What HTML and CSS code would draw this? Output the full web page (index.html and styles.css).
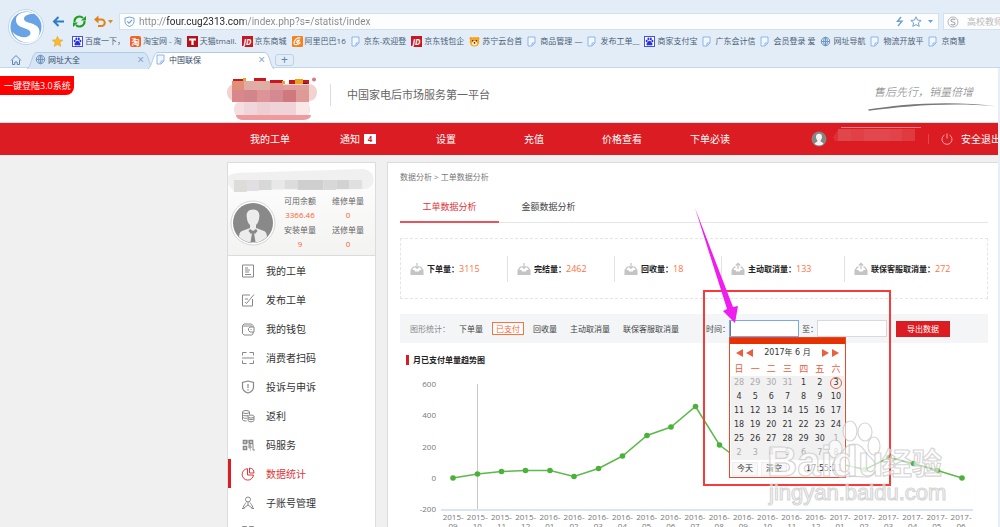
FILE: index.html
```html
<!DOCTYPE html>
<html lang="zh-CN">
<head>
  <meta charset="UTF-8">
  <meta name="viewport" content="width=device-width, initial-scale=1.0">
  <title>中国联保</title>
  <link rel="stylesheet" href="styles.css">
</head>
<body>

  <!-- shared icons -->
  <svg class="defs" width="0" height="0">
    <symbol id="i-page" viewBox="0 0 11 11"><path d="M1 1h7v6l-3 3H1z" fill="#f3f8ff" stroke="#8db4ec"/><path d="M5 10V7h3" fill="none" stroke="#8db4ec"/></symbol>
    <symbol id="i-baidu" viewBox="0 0 11 11"><rect x=".5" y=".5" width="10" height="10" fill="#fff" stroke="#4550e6"/><g fill="#2932e1"><ellipse cx="2.7" cy="5" rx="1" ry="1.3"/><ellipse cx="4.4" cy="2.9" rx="1" ry="1.3"/><ellipse cx="6.8" cy="2.9" rx="1" ry="1.3"/><ellipse cx="8.4" cy="5" rx="1" ry="1.3"/><path d="M5.5 4.8c1.400 0 1.500 1.200 2.600 2.100 1 1 .3 2.600-1 2.500-1-.2-2.200-.2-3.200 0-1.300.1-2-1.500-1-2.500 1.100-.9 1.200-2.100 2.600-2.100z"/></g></symbol>
    <symbol id="i-jd" viewBox="0 0 11 11"><rect width="11" height="11" fill="#c81623"/><text x="5.500" y="8.500" text-anchor="middle" font-size="8" font-weight="700" font-style="italic" fill="#fff">JD</text></symbol>
    <symbol id="i-globe" viewBox="0 0 11 11"><g fill="none" stroke="#6f96bd"><circle cx="5.500" cy="5.500" r="4.200"/><ellipse cx="5.500" cy="5.500" rx="1.900" ry="4.200"/><path d="M1.300 5.500h8.400M5.500 1.300v8.400" /></g></symbol>
    <symbol id="i-in" viewBox="0 0 14 14"><path d="M3 4.500L.5 8v5h13V8L11 4.500H9.500v1.200h.8L11.800 8H9.500L9 9.500H5L4.500 8H2.200l1.500-2.300h.8V4.500z" fill="#c4c4c4"/><path d="M7 1v5M4.800 4.200L7 6.400l2.200-2.200" fill="none" stroke="#c4c4c4" stroke-width="1.200"/></symbol>
    <symbol id="i-out" viewBox="0 0 14 14"><path d="M3 4.500L.5 8v5h13V8L11 4.500H9.500v1.200h.8L11.800 8H9.500L9 9.500H5L4.500 8H2.200l1.500-2.300h.8V4.500z" fill="#c4c4c4"/><path d="M7 7V1.500M4.800 3.500L7 1.300l2.200 2.200" fill="none" stroke="#c4c4c4" stroke-width="1.200"/></symbol>
  </svg>

  <!-- browser toolbar -->
  <div class="browser">
    <div class="browser-top">
      <svg class="browser-logo" viewBox="0 0 36 36">
        <circle cx="18" cy="18" r="17.500" fill="#f7fbff" stroke="#c3d3e6"/>
        <circle cx="18" cy="18" r="15.500" fill="#68a3e6"/>
        <path d="M26 5C19 1 8 3.500 8 11c0 9.500 14.500 7 14.500 13 0 4-6.500 5.500-12 3-2.500-1-4.500-2.500-6-4.500 2 7 8 11 15 11 7-.5 12-5 12-11 0-9.500-15.500-7.500-15.500-12.500 0-4 5.500-5.500 10-5z" fill="#fff"/>
      </svg>
      <div class="browser-rows">
        <div class="address-row">
          <button class="nav-btn" aria-label="后退"><svg width="13" height="13" viewBox="0 0 13 13"><path d="M12 6.500H2M6.500 2L2 6.500 6.500 11" fill="none" stroke="#2b7cc4" stroke-width="2"/></svg></button>
          <button class="nav-btn" aria-label="刷新"><svg width="13" height="13" viewBox="0 0 13 13"><path d="M1.500 7a5 5 0 0 1 8.500-4M11.500 6a5 5 0 0 1-8.500 4" fill="none" stroke="#1fa01f" stroke-width="2"/><path d="M8 5.500h5V1zM5 7.500H0V12z" fill="#1fa01f"/></svg></button>
          <button class="nav-btn undo" aria-label="撤销"><svg width="12" height="13" viewBox="0 0 12 13"><path d="M2 4.500h5.500a3.200 3.200 0 0 1 0 6.500H4" fill="none" stroke="#e08317" stroke-width="2"/><path d="M0 4.500L4.500.5v8z" fill="#e08317"/></svg></button>
          <button class="nav-btn caret-btn" aria-label="更多"><svg width="5" height="4" viewBox="0 0 5 4"><path d="M0 0h5L2.500 3.500z" fill="#d98a2b"/></svg></button>
          <div class="address">
            <svg width="11" height="11" viewBox="0 0 11 11"><path d="M5.500 1L10 2.200v3.300c0 2.500-2 4-4.500 5-2.500-1-4.500-2.500-4.500-5V2.200z" fill="none" stroke="#7aa0cc"/><path d="M3.200 5.300l1.800 1.800 3-3.300" fill="none" stroke="#7aa0cc" stroke-width="1.200"/></svg>
            <input class="url" type="text" aria-label="网址" value="http://four.cug2313.com/index.php?s=/statist/index">
            <svg width="8" height="11" viewBox="0 0 8 11"><path d="M5 1L1.500 5.200H6L2 10" fill="none" stroke="#6f9fd0" stroke-width="1.400"/></svg>
            <svg width="12" height="11" viewBox="0 0 12 11"><path d="M6 .8l1.500 3.300 3.600.4-2.700 2.400.8 3.500L6 8.600l-3.200 1.800.8-3.500L.9 4.500l3.600-.4z" fill="none" stroke="#6f9fd0"/></svg>
            <svg width="5" height="3" viewBox="0 0 5 3"><path d="M0 0h5L2.500 3z" fill="#6f9fd0"/></svg>
          </div>
          <div class="search">
            <svg width="12" height="12" viewBox="0 0 12 12"><circle cx="6" cy="6" r="5" fill="none" stroke="#b5b5b5"/><path d="M8.300 3.800C6.500 2.500 4 3 4 4.500 4 6.500 8 5.500 8 7.500 8 9 5.500 9.300 3.700 8.200" fill="none" stroke="#aaa" stroke-width="1.200"/></svg>
            <input type="text" aria-label="搜索" placeholder="高校教师">
          </div>
        </div>
        <div class="bookmarks">
          <svg class="fav" viewBox="0 0 11 11"><path d="M5.500.3L7 3.800l3.800.3-2.900 2.500.9 3.800-3.300-2-3.300 2 .9-3.800L.2 4.100 4 3.800z" fill="#f9bb2c" stroke="#e59a18" stroke-width=".5"/></svg>
          <a href="#"><svg><use href="#i-baidu"/></svg>百度一下，</a>
          <a href="#"><svg viewBox="0 0 11 11"><rect width="11" height="11" rx="2" fill="#f0622c"/><text x="5.500" y="8.500" text-anchor="middle" font-size="8" font-weight="700" fill="#fff">淘</text></svg>淘宝网 - 淘</a>
          <a href="#"><svg viewBox="0 0 11 11"><rect width="11" height="11" fill="#b5121b"/><path d="M2 2.500h7v2H6.600V9H4.400V4.500H2z" fill="#fff"/></svg>天猫tmall.</a>
          <a href="#"><svg><use href="#i-jd"/></svg>京东商城</a>
          <a href="#"><svg viewBox="0 0 11 11"><rect width="11" height="11" rx="1" fill="#f58220"/><path d="M8.500 2C5 1.200 2 4 2 7.500 2.300 9.500 6 9 8.500 6.500M4 6.500c1-2 2-2.600 3.200-2.300C7.800 5 6 6.500 5 7" fill="none" stroke="#fff" stroke-width="1.200"/></svg>阿里巴巴16</a>
          <a href="#"><svg><use href="#i-page"/></svg>京东-欢迎登</a>
          <a href="#"><svg><use href="#i-jd"/></svg>京东钱包企</a>
          <a href="#"><svg viewBox="0 0 11 11"><circle cx="2" cy="2.500" r="1.500" fill="#f39a1d"/><circle cx="9" cy="2.500" r="1.500" fill="#f39a1d"/><circle cx="5.500" cy="5.800" r="4.800" fill="#f9a51b"/><ellipse cx="5.500" cy="7.200" rx="2.600" ry="2.200" fill="#fff3d6"/><circle cx="3.600" cy="4.800" r=".8" fill="#3a2a10"/><circle cx="7.400" cy="4.800" r=".8" fill="#3a2a10"/><circle cx="5.500" cy="6.800" r=".9" fill="#3a2a10"/></svg>苏宁云台首</a>
          <a href="#"><svg><use href="#i-page"/></svg>商品管理 —</a>
          <a href="#"><svg><use href="#i-page"/></svg>发布工单__</a>
          <a href="#"><svg><use href="#i-baidu"/></svg>商家支付宝</a>
          <a href="#"><svg><use href="#i-page"/></svg>广东会计信</a>
          <a href="#"><svg><use href="#i-page"/></svg>会员登录 爱</a>
          <a href="#"><svg><use href="#i-globe"/></svg>网址导航</a>
          <a href="#"><svg><use href="#i-page"/></svg>物流开放平</a>
          <a href="#"><svg><use href="#i-page"/></svg>京商慧</a>
        </div>
      </div>
    </div>
    <div class="browser-tabs">
      <svg class="home" viewBox="0 0 12 12"><path d="M1 6.500L6 1.500l5 5M2.500 6v4.500h2.300V8h2.400v2.500h2.300V6" fill="none" stroke="#5c88b8"/></svg>
      <div class="browser-tab">
        <svg class="tab-shape" viewBox="0 0 126 17" preserveAspectRatio="none"><path d="M0 17C4 15 5 2 9 .5h108c5 1 5 14 9 16.500" fill="#d6e5f6" stroke="#b3cae4"/></svg>
        <svg class="tab-icon" viewBox="0 0 11 11"><use href="#i-globe"/></svg>
        <span>网址大全</span>
        <button class="tab-close" aria-label="关闭">×</button>
      </div>
      <div class="browser-tab current">
        <svg class="tab-shape" viewBox="0 0 126 17" preserveAspectRatio="none"><path d="M0 17C4 15 5 2 9 .5h108c5 1 5 14 9 16.500" fill="#fff" stroke="#b3cae4"/></svg>
        <svg class="tab-icon" viewBox="0 0 11 11"><use href="#i-page"/></svg>
        <span>中国联保</span>
        <button class="tab-close" aria-label="关闭">×</button>
      </div>
      <button class="new-tab" aria-label="新标签">+</button>
    </div>
  </div>

  <div class="page">
    <header class="header">
      <a class="quick-login" href="#">一键登陆3.0系统</a>
      <svg class="logo" viewBox="0 0 92 46">
        <path d="M6 2h11v4H6zM27 1h12v5H27zM43 3h13v4H43zM62 3h20v7H62z" fill="#c81a1e"/>
        <path d="M16 1h3v3h-3zM37 4h4v3h-4zM55 4h3v3h-3zM68 2h8v6h-8z" fill="#e9a31c"/>
        <path d="M76 6h4v4h-4z" fill="#4a1a3a"/>
        <circle cx="87" cy="2.500" r="2" fill="#d9797e"/>
        <rect y="7" width="90" height="17" rx="8" fill="#f3d3d0"/>
        <rect x="7" y="24" width="76" height="17" rx="8" fill="#f5dde0"/>
        <path d="M5 4h12v9H5z" fill="#e0907a"/><path d="M17 4h26v9H17z" fill="#dfada3"/><path d="M43 6h13v7H43z" fill="#dd9a96"/><path d="M56 8h26v5H56z" fill="#e0a09b"/>
        <path d="M5 13h12v12H5z" fill="#d9878b"/><path d="M17 13h13v12H17z" fill="#d2868c"/><path d="M30 13h13v12H30z" fill="#dd9497"/><path d="M43 13h13v12H43z" fill="#d48a90"/><path d="M56 13h13v12H56z" fill="#cf797e"/><path d="M69 13h13v12H69z" fill="#dd9a96"/>
        <path d="M17 25h13v13H17z" fill="#f0d6db"/><path d="M30 25h13v13H30z" fill="#ecced3"/><path d="M43 25h26v13H43z" fill="#f0d3d8"/><path d="M69 25h13v13H69z" fill="#f8e8e8"/>
        <path d="M9 38h75c0 4-5 5-9 5H17c-5 0-8-2-8-5z" fill="#ef9a9c"/>
      </svg>
      <p class="tagline">中国家电后市场服务第一平台</p>
      <div class="slogan">
        <span>售后先行，销量倍增</span>
        <svg viewBox="0 0 140 9" preserveAspectRatio="none"><path d="M0 7.500C35 2 90-2 140 4.500 90 0 40 4 1 8.800z" fill="#777"/></svg>
      </div>
    </header>

    <nav class="nav">
      <a href="#">我的工单</a>
      <a href="#">通知<b class="badge">4</b></a>
      <a href="#">设置</a>
      <a href="#">充值</a>
      <a href="#">价格查看</a>
      <a href="#">下单必读</a>
      <div class="user">
        <svg class="user-face" viewBox="0 0 16 16"><circle cx="8" cy="8" r="7.500" fill="#858585"/><path d="M8 2.800c2.400 0 3.200 1.700 3 3.500-.2 1.700-.9 2.700-1.500 3.500.2 1.700 2.700 1.500 3 3-2 2.300-7 2.300-9 0 .3-1.500 2.800-1.300 3-3C5.900 9 5.200 8 5 6.300c-.2-1.800.6-3.500 3-3.500z" fill="#f2f2f2"/></svg>
        <svg class="user-name" viewBox="0 0 90 16"><path d="M8 0h80v1H8z" fill="#eb8084"/><path d="M0 10L5 3h8v11H2z" fill="#de3037"/><path d="M5 2h13v12H5z" fill="#e0474c"/><path d="M18 2h13v12H18z" fill="#df4147"/><path d="M31 2h26v12H31z" fill="#e1484e"/><path d="M57 2h12v12H57z" fill="#e04349"/><path d="M69 2h13v12H69z" fill="#df3a40"/></svg>
        <i class="user-sep"></i>
        <svg class="power" viewBox="0 0 12 12"><path d="M3.500 2a5 5 0 1 0 5 0M6 .5v5" fill="none" stroke="#f3a6a9"/></svg>
        <a href="#">安全退出</a>
      </div>
    </nav>

    <div class="layout">
      <aside class="sidebar">
        <div class="profile">
          <svg class="profile-name" viewBox="0 0 148 24"><path d="M0 8C2 2 20 4 40 3L135 0c15 1 15 18 3 20-40 2-90-1-125 3C5 24-2 16 0 8z" fill="#f0f0f0"/><path d="M6 11h13v12H6z" fill="#dcdcd9"/><path d="M19 11h12v11H19z" fill="#e2dfe4"/><path d="M31 11h13v10H31z" fill="#d8d8d8"/><path d="M44 11h13v9H44z" fill="#e8e8e8"/><path d="M57 11h13v9H57z" fill="#dcdcdc"/><path d="M70 11h26v10H70z" fill="#cfcfcf"/><path d="M96 11h13v10H96z" fill="#d8d8d8"/><path d="M109 11h13v9h-13z" fill="#d2d2d2"/><path d="M122 11h13v9h-13z" fill="#e0e0e0"/></svg>
          <div class="profile-body">
            <svg class="avatar" viewBox="0 0 46 46"><circle cx="23" cy="23" r="22" fill="#fff" stroke="#d5d5d5"/><circle cx="23" cy="23" r="20" fill="#898989"/><path d="M23 9.500c5 0 6.800 3.500 6.300 7.500-.4 4-1.600 6.500-3.300 8v3l8 3c2 .8 2.800 2.500 3 6A20 20 0 0 1 9 37c.2-3.500 1-5.200 3-6l8-3v-3c-1.700-1.500-2.900-4-3.300-8-.5-4 1.300-7.500 6.300-7.500z" fill="#ececec"/><path d="M20 29l3 2 3-2 1.500 2-2.500 3-1-1 1.500 9h-5L22 33l-1 1-2.500-3z" fill="#898989"/></svg>
            <dl>
              <div><dt>可用余额</dt><dd>3366.46</dd></div>
              <div><dt>维修单量</dt><dd>0</dd></div>
              <div><dt>安装单量</dt><dd>9</dd></div>
              <div><dt>送修单量</dt><dd>0</dd></div>
            </dl>
          </div>
        </div>
        <ul class="menu">
          <li><a href="#"><svg viewBox="0 0 14 14"><path d="M1.500 1h11v12h-11z"/><path d="M4 4h3M4 6h5M4 8h4M4 10.500h6"/></svg>我的工单</a></li>
          <li><a href="#"><svg viewBox="0 0 14 14"><path d="M9 2H1.500v11h10V6M4 6h3M4 9l1.500 1.500L13 1.500"/></svg>发布工单</a></li>
          <li><a href="#"><svg viewBox="0 0 14 14"><path d="M12 5V3.500L10.500 2H3L1.500 3.500v8L3 13h7.500l1.500-1V10M13 5H9L7.500 6.500v2L9 10h4zM9.500 7.500h1M2 4h9"/></svg>我的钱包</a></li>
          <li><a href="#"><svg viewBox="0 0 14 14"><path d="M1.500 4.500v-3h4M8.500 1.500h4v3M12.500 9.500v3h-4M5.500 12.500h-4v-3M1 7h12"/></svg>消费者扫码</a></li>
          <li><a href="#"><svg viewBox="0 0 14 14"><path d="M7 1l5.500 1.500V7c0 3-2.500 5-5.500 6-3-1-5.500-3-5.500-6V2.500zM7 4v4M7 9.300v1.200" stroke-width="1.200"/></svg>投诉与申诉</a></li>
          <li><a href="#"><svg viewBox="0 0 14 14"><ellipse cx="5" cy="3" rx="3.500" ry="1.500"/><path d="M1.500 3v7.500c0 1 2 1.500 4 1.500M8.500 3v2.500M1.500 5.500C2 7 6 7 7 6.500M1.500 8c.5 1.300 3 1.500 4.500 1.200"/><ellipse cx="10" cy="7.500" rx="3" ry="1.500"/><path d="M7 7.500v4c.5 1.800 5.500 1.800 6 0v-4M7 9.500c.5 1.500 5.500 1.500 6 0"/></svg>返利</a></li>
          <li><a href="#"><svg viewBox="0 0 14 14"><path d="M2.500 2.500h3v3h-3zM8.500 2.500h3v3h-3zM2.500 8.500h3v3h-3z" stroke-width="1.600"/><path d="M8 8h2v2H8zM11 9h2M9 12h1M11 11h2v2M7 2v3M7 7h3M11 7h2"/></svg>码服务</a></li>
          <li class="active"><a href="#"><svg viewBox="0 0 14 14"><path d="M6.500 1.700a5.700 5.700 0 1 0 6 6.300h-6z"/><path d="M8.500 1v5H13a5 5 0 0 0-4.500-5z"/></svg>数据统计</a></li>
          <li><a href="#"><svg viewBox="0 0 14 14"><circle cx="7" cy="3.500" r="2.500"/><path d="M7 6v3L2 12.500M7 9l5 3.500M5 6.500C4 8 3 9 2 11.500M9 6.500c1 1.500 2 2.500 3 5M1 12.500h2.500M10.500 12.500H13"/></svg>子账号管理</a></li>
          <li><a href="#" aria-label="更多"><svg viewBox="0 0 14 14"><path d="M1.500 1.500h4v4h-4zM8.500 1.500h4v4h-4zM1.500 8.500h4v4h-4zM8.500 8.500h4v4h-4z"/></svg></a></li>
        </ul>
      </aside>

      <main class="main">
        <p class="crumbs">数据分析 &gt; 工单数据分析</p>
        <div class="tabs">
          <a class="tab active" href="#">工单数据分析</a>
          <a class="tab" href="#">金额数据分析</a>
        </div>

        <div class="stats">
          <div class="stat"><svg><use href="#i-in"/></svg><b>下单量：</b><em>3115</em></div>
          <div class="stat"><svg><use href="#i-in"/></svg><b>完结量：</b><em>2462</em></div>
          <div class="stat"><svg><use href="#i-in"/></svg><b>回收量：</b><em>18</em></div>
          <div class="stat"><svg><use href="#i-out"/></svg><b>主动取消量：</b><em>133</em></div>
          <div class="stat"><svg><use href="#i-out"/></svg><b>联保客服取消量：</b><em>272</em></div>
        </div>

        <form class="filter">
          <span class="filter-title">图形统计：</span>
          <button type="button" class="type">下单量</button>
          <button type="button" class="type active">已支付</button>
          <button type="button" class="type">回收量</button>
          <button type="button" class="type">主动取消量</button>
          <button type="button" class="type">联保客服取消量</button>
          <label class="from" for="dateFrom">时间：</label>
          <div class="date-field">
            <input class="focused" type="text" id="dateFrom">
            <div class="calendar">
              <div class="calendar-bar"></div>
              <div class="calendar-head">
                <button type="button" aria-label="上一年"><svg viewBox="0 0 7 8"><path d="M7 0v8L0 4z"/></svg></button>
                <button type="button" aria-label="上一月"><svg viewBox="0 0 7 8"><path d="M7 0v8L0 4z"/></svg></button>
                <span>2017年 6 月</span>
                <button type="button" aria-label="下一月"><svg viewBox="0 0 7 8"><path d="M0 0v8l7-4z"/></svg></button>
                <button type="button" aria-label="下一年"><svg viewBox="0 0 7 8"><path d="M0 0v8l7-4z"/></svg></button>
              </div>
              <table>
                <thead>
                  <tr><th>日</th><th>一</th><th>二</th><th>三</th><th>四</th><th>五</th><th>六</th></tr>
                </thead>
                <tbody>
                  <tr><td class="out">28</td><td class="out">29</td><td class="out">30</td><td class="out">31</td><td>1</td><td>2</td><td><span class="today">3</span></td></tr>
                  <tr><td>4</td><td>5</td><td>6</td><td>7</td><td>8</td><td>9</td><td>10</td></tr>
                  <tr><td>11</td><td>12</td><td>13</td><td>14</td><td>15</td><td>16</td><td>17</td></tr>
                  <tr><td>18</td><td>19</td><td>20</td><td>21</td><td>22</td><td>23</td><td>24</td></tr>
                  <tr><td>25</td><td>26</td><td>27</td><td>28</td><td>29</td><td>30</td><td class="out">1</td></tr>
                  <tr><td class="out">2</td><td class="out">3</td><td class="out">4</td><td class="out">5</td><td class="out">6</td><td class="out">7</td><td class="out">8</td></tr>
                </tbody>
              </table>
              <div class="calendar-foot">
                <button type="button">今天</button>
                <button type="button">清空</button>
                <span>17:55:21</span>
              </div>
            </div>
          </div>
          <label for="dateTo">至：</label>
          <input type="text" id="dateTo">
          <button type="button" class="export">导出数据</button>
        </form>

        <h2 class="chart-title">月已支付单量趋势图</h2>
        <div class="chart">
          <div class="y-axis"><span>600</span><span>400</span><span>200</span><span>0</span><span>-200</span></div>
          <div class="plot">
            <svg viewBox="0 0 532 126" preserveAspectRatio="none">
              <path d="M36.500 0v125" stroke="#c9c9c9"/>
              <path d="M0 126h532" stroke="#dbe5f1" stroke-width="2"/>
              <polyline points="12,94 36.500,90 60.500,87.500 84.500,86.500 109,86.500 133,92.500 157.500,84.500 181.500,72 206,51.500 230,43 254.500,22.500 278.500,61 302.500,79 327,82 351,76 375.500,79 399.500,80 424,85.500 448,73.500 472.500,79.500 496.500,86.500 521,94" fill="none" stroke="#5cba4b" stroke-width="1.500"/>
              <g fill="#4bb13a"><circle cx="12" cy="94" r="2.800"/><circle cx="36.500" cy="90" r="2.800"/><circle cx="60.500" cy="87.500" r="2.800"/><circle cx="84.500" cy="86.500" r="2.800"/><circle cx="109" cy="86.500" r="2.800"/><circle cx="133" cy="92.500" r="2.800"/><circle cx="157.500" cy="84.500" r="2.800"/><circle cx="181.500" cy="72" r="2.800"/><circle cx="206" cy="51.500" r="2.800"/><circle cx="230" cy="43" r="2.800"/><circle cx="254.500" cy="22.500" r="2.800"/><circle cx="278.500" cy="61" r="2.800"/><circle cx="302.500" cy="79" r="2.800"/><circle cx="327" cy="82" r="2.800"/><circle cx="351" cy="76" r="2.800"/><circle cx="375.500" cy="79" r="2.800"/><circle cx="399.500" cy="80" r="2.800"/><circle cx="424" cy="85.500" r="2.800"/><circle cx="448" cy="73.500" r="2.800"/><circle cx="472.500" cy="79.500" r="2.800"/><circle cx="496.500" cy="86.500" r="2.800"/><circle cx="521" cy="94" r="2.800"/></g>
            </svg>
            <div class="x-axis">
              <span>2015-<br>09</span><span>2015-<br>10</span><span>2015-<br>11</span><span>2015-<br>12</span><span>2016-<br>01</span><span>2016-<br>02</span><span>2016-<br>03</span><span>2016-<br>04</span><span>2016-<br>05</span><span>2016-<br>06</span><span>2016-<br>07</span><span>2016-<br>08</span><span>2016-<br>09</span><span>2016-<br>10</span><span>2016-<br>11</span><span>2016-<br>12</span><span>2017-<br>01</span><span>2017-<br>02</span><span>2017-<br>03</span><span>2017-<br>04</span><span>2017-<br>05</span><span>2017-<br>06</span>
            </div>
          </div>
        </div>

        <!-- annotations -->
        <div class="mark-box"></div>
        <svg class="mark-arrow" viewBox="0 0 44 118"><path d="M1 1l32 101-4 2 12 12 3-17-5 1z" fill="#f01df0"/></svg>
        <svg class="watermark" viewBox="0 0 190 90">
          <g fill="#fff" fill-opacity=".6" stroke="#c4c4c4" stroke-opacity=".7" stroke-width="1.200">
            <ellipse cx="68" cy="29" rx="7" ry="9"/>
            <ellipse cx="83" cy="11" rx="7" ry="10"/>
            <ellipse cx="98" cy="12" rx="7" ry="9"/>
            <ellipse cx="107" cy="26" rx="6" ry="9"/>
            <path d="M87 24c9 0 10 8 17 14 9 8 4 20-6 19-8-1-14-1-22 0-10 1-15-11-6-19 7-6 8-14 17-14z"/>
            <text x="0" y="56" font-size="42" font-weight="700">Baidu</text>
            <text x="115" y="54" font-size="30" font-weight="700">经验</text>
            <text x="2" y="80" font-size="22">jingyan.baidu.com</text>
          </g>
        </svg>
      </main>
    </div>
  </div>

</body>
</html>
```

FILE: styles.css
```css
* {
  box-sizing: border-box;
}

body {
  margin: 0;
  height: 100vh;
  overflow: hidden;
  background: #f0f0f0;
  color: #444;
  font-family: "Open Sans", "Noto Sans CJK SC", sans-serif;
  font-size: 8px;
  line-height: 12px;
}

a {
  color: inherit;
  text-decoration: none;
}

button {
  padding: 0;
  border: 0;
  background: none;
  color: inherit;
  font: inherit;
  cursor: pointer;
}

input {
  min-width: 0;
  padding: 0;
  border: 0;
  outline: 0;
  background: none;
  font: inherit;
}

svg {
  display: block;
  flex: none;
}

p, h2, ul, dl, dd {
  margin: 0;
  padding: 0;
}

.defs {
  position: absolute;
}

/* browser toolbar */
.browser {
  background: #e3edf8;
  color: #4a6076;
}

.browser-top {
  display: flex;
  overflow: hidden;
}

.browser-logo {
  width: 36px;
  height: 36px;
  margin: 9px 8px 0;
}

.browser-rows {
  flex: 1;
  min-width: 0;
  padding-top: 13px;
}

.address-row {
  display: flex;
  align-items: center;
  height: 17px;
}

.nav-btn {
  margin-right: 8px;
}

.nav-btn.undo {
  margin-right: 2px;
}

.nav-btn.caret-btn {
  margin-right: 6px;
}

.address {
  display: flex;
  flex: 1;
  align-items: center;
  gap: 6px;
  height: 17px;
  padding: 0 5px 0 4px;
  border: 1px solid #d3e0ee;
  background: #fbfdff;
}

.url {
  flex: 1;
  height: 15px;
  margin-left: -2px;
  background: linear-gradient(90deg, #888 28px, #222 28px, #222 105px, #888 105px);
  -webkit-background-clip: text;
  background-clip: text;
  color: transparent;
  font-family: Roboto, sans-serif;
  font-size: 10px;
}

.search {
  display: flex;
  align-items: center;
  gap: 8px;
  width: 57px;
  height: 17px;
  margin-left: 4px;
  padding-left: 3px;
  overflow: hidden;
  border: 1px solid #d3e0ee;
  border-right: 0;
  background: #fbfdff;
}

.search input {
  font-size: 9px;
}

.search input::placeholder {
  color: #bbb;
}

.bookmarks {
  display: flex;
  align-items: center;
  gap: 5px;
  height: 22px;
  white-space: nowrap;
}

.bookmarks .fav {
  width: 11px;
  height: 11px;
  margin-right: 4px;
}

.bookmarks a {
  display: flex;
  align-items: center;
  gap: 2px;
}

.bookmarks a svg {
  width: 11px;
  height: 11px;
}

.browser-tabs {
  display: flex;
  align-items: center;
  height: 16px;
  border-bottom: 1px solid #c6d7ea;
  color: #2f4a66;
}

.home {
  width: 12px;
  height: 12px;
  margin: 0 5px 0 10px;
}

.browser-tab {
  position: relative;
  display: flex;
  align-items: center;
  width: 126px;
  height: 16px;
  margin-right: -5px;
  padding: 0 9px 0 8px;
}

.tab-shape {
  position: absolute;
  top: 0;
  left: 0;
  width: 100%;
  height: 17px;
}

.tab-icon {
  position: relative;
  width: 11px;
  height: 11px;
  margin-right: 2px;
}

.browser-tab span {
  position: relative;
}

.tab-close {
  position: relative;
  margin-left: auto;
  color: #7d9cc0;
  font-size: 12px;
}

.new-tab {
  width: 19px;
  height: 12px;
  margin-left: 6px;
  border: 1px solid #bdd0e6;
  border-radius: 3px;
  color: #5c80a8;
  font-size: 12px;
  line-height: 8px;
}

/* page header */
.page {
  overflow: hidden;
  border-right: 2px solid #e6eef8;
}

.header {
  display: flex;
  align-items: flex-start;
  height: 55px;
  border-bottom: 1px solid #ddd;
  background: #fff;
}

.quick-login {
  width: 74px;
  height: 19px;
  margin: 8px 153px 0 0;
  padding-left: 4px;
  border-radius: 0 0 8px 0;
  background: #f00;
  color: #fff;
  font-size: 9px;
  line-height: 20px;
  white-space: nowrap;
}

.logo {
  width: 92px;
  height: 46px;
  margin-top: 9px;
}

.tagline {
  margin: 16px 0 0 11px;
  padding-left: 16px;
  border-left: 1px solid #ddd;
  color: #666;
  font-size: 11px;
  line-height: 22px;
}

.slogan {
  width: 130px;
  margin: 14px 0 0 auto;
  color: #777;
  font-size: 11px;
  font-style: italic;
  font-weight: 300;
  line-height: 20px;
}

.slogan span {
  display: block;
  padding-left: 6px;
}

.slogan svg {
  width: 130px;
  height: 9px;
}

.nav {
  display: flex;
  align-items: center;
  height: 32px;
  padding-left: 226px;
  background: #db1c22;
  color: #fff;
  font-size: 10px;
  white-space: nowrap;
}

.nav > a {
  display: flex;
  flex: none;
  align-items: center;
  justify-content: center;
  width: 88px;
}

.badge {
  width: 12px;
  height: 10px;
  margin-left: 4px;
  background: #fff;
  color: #db1c22;
  font-size: 8px;
  line-height: 10px;
  text-align: center;
}

.user {
  display: flex;
  flex: none;
  align-items: center;
  margin-left: 57px;
}

.user-face {
  width: 16px;
  height: 16px;
}

.user-name {
  width: 90px;
  height: 16px;
  margin: 0 5px 8px 6px;
}

.user-sep {
  width: 1px;
  height: 10px;
  background: #e2474c;
}

.power {
  width: 12px;
  height: 12px;
  margin: 0 8px 0 12px;
}

/* columns */
.layout {
  display: grid;
  grid-template-columns: 149px 1fr;
  align-items: start;
  gap: 11px;
  padding: 7px 0 0 227px;
}

.sidebar {
  border: 1px solid #dcdcdc;
  background: #fff;
}

.profile {
  height: 93px;
  padding-top: 6px;
  border-bottom: 1px solid #dcdcdc;
  background: linear-gradient(#fff, #f3f3f2);
}

.profile-name {
  width: 147px;
  height: 24px;
}

.profile-body {
  display: flex;
}

.avatar {
  width: 46px;
  height: 46px;
  margin: 7px 0 0 2px;
}

.profile dl {
  display: grid;
  grid-template-columns: 48px 48px;
  height: 58px;
  margin-top: 1px;
  color: #666;
  line-height: 14px;
  text-align: center;
}

.profile dd {
  color: #ff5f30;
}

.menu {
  list-style: none;
  color: #333;
  font-size: 10px;
}

.menu a {
  display: flex;
  align-items: center;
  gap: 11px;
  height: 29px;
  padding-left: 13px;
  border-left: 0 solid #db1c22;
}

.menu svg {
  width: 14px;
  height: 14px;
  fill: none;
  stroke: #888;
}

.menu .active a {
  padding-left: 10px;
  border-left-width: 3px;
  color: #e0353a;
}

.menu .active svg {
  stroke: #e0353a;
}

.main {
  position: relative;
  min-width: 0;
  padding: 8px 10px 0 12px;
  border: 1px solid #dcdcdc;
  border-width: 1px 0 0 1px;
  background: #fff;
}

.crumbs {
  color: #777;
}

.tabs {
  display: flex;
  height: 32px;
  margin-top: 8px;
  border-bottom: 1px solid #e5e5e5;
  font-size: 9px;
  line-height: 32px;
}

.tab {
  width: 99px;
  height: 32px;
  text-align: center;
}

.tab.active {
  border-bottom: 2px solid #e8545a;
  color: #e0353a;
}

.stats {
  display: grid;
  grid-template-columns: 107px 107px 107px 123px 1fr;
  align-items: center;
  height: 61px;
  margin-top: 15px;
  border: 1px dashed #e5e5e5;
}

.stat {
  display: flex;
  align-items: center;
  height: 26px;
  padding-left: 9px;
  border-right: 1px solid #e2e2e2;
  color: #222;
  white-space: nowrap;
}

.stat:last-child {
  border-right: 0;
}

.stat svg {
  width: 14px;
  height: 14px;
  margin-right: 3px;
}

.stat em {
  color: #ff7240;
  font-size: 9px;
  font-style: normal;
}

/* filter bar */
.filter {
  display: flex;
  align-items: center;
  gap: 5px;
  height: 29px;
  margin-top: 15px;
  padding-left: 10px;
  background: #f3f5f7;
  white-space: nowrap;
}

.filter-title {
  color: #888;
}

.type {
  height: 13px;
  padding: 0 3px;
  border: 1px solid transparent;
  line-height: 11px;
}

.type.active {
  border-color: #ff7240;
  background: #fff;
  color: #ff5f30;
}

.filter .from {
  margin-left: 18px;
}

.filter label {
  margin-right: -6px;
}

.filter input {
  width: 70px;
  height: 17px;
  padding: 0 2px;
  border: 1px solid #d9d9d9;
  background: #fff;
}

.filter .focused {
  border-color: #7ba7ee;
  box-shadow: inset 1px 0 0 #777;
}

.date-field {
  position: relative;
  display: flex;
  margin-right: -2px;
}

.export {
  width: 54px;
  height: 16px;
  margin-left: 4px;
  background: #db1c22;
  color: #fff;
}

.calendar {
  position: absolute;
  top: 17px;
  left: 0;
  z-index: 2;
  width: 117px;
  border: 1px solid #e8492a;
  background: #fff;
  color: #333;
  font-family: "DejaVu Sans", "Noto Sans CJK SC", sans-serif;
}

.calendar-bar {
  height: 6px;
  background: #e63200;
}

.calendar-head {
  display: flex;
  align-items: center;
  gap: 3px;
  height: 17px;
  padding: 0 6px;
}

.calendar-head span {
  flex: 1;
  text-align: center;
}

.calendar-head svg {
  width: 7px;
  height: 8px;
  fill: #e8603f;
}

.calendar table {
  width: 113px;
  margin: 0 1px;
  border-collapse: collapse;
  table-layout: fixed;
  text-align: center;
}

.calendar th,
.calendar td {
  height: 14px;
  padding: 0;
  line-height: 12px;
}

.calendar th {
  height: 15px;
  color: #e8603f;
  font-size: 9px;
  font-weight: 400;
}

.calendar tbody {
  background: #f1f1f1;
}

.calendar .out {
  color: #aaa;
}

.today {
  display: block;
  width: 12px;
  height: 12px;
  margin: 0 auto;
  border: 1px solid #e8603f;
  border-radius: 50%;
  line-height: 10px;
}

.calendar-foot {
  display: flex;
  align-items: center;
  gap: 3px;
  height: 17px;
  padding: 0 3px 0 2px;
}

.calendar-foot button {
  width: 26px;
  height: 14px;
  border: 1px solid #eee;
  background: #f8f8f8;
}

.calendar-foot span {
  margin-left: auto;
}

/* chart */
.chart-title {
  margin: 12px 0 0 6px;
  padding-left: 4px;
  border-left: 3px solid #db1c22;
  color: #222;
  font-size: 8px;
  line-height: 10px;
}

.chart {
  display: flex;
  margin: 19px 15px 0 0;
  color: #777;
}

.y-axis {
  display: flex;
  flex-direction: column;
  justify-content: space-between;
  width: 36px;
  height: 137px;
  margin: -6px 5px 0 0;
  text-align: right;
}

.plot {
  flex: 1;
  min-width: 0;
}

.plot svg {
  width: 100%;
  height: 126px;
  overflow: visible;
}

.x-axis {
  display: flex;
  padding-top: 2px;
  line-height: 9px;
  text-align: center;
}

.x-axis span {
  flex: 1;
}

/* annotations */
.mark-box {
  position: absolute;
  top: 127px;
  left: 315px;
  z-index: 3;
  width: 188px;
  height: 196px;
  border: 2px solid #f93a3a;
  pointer-events: none;
}

.mark-arrow {
  position: absolute;
  top: 44px;
  left: 306px;
  z-index: 4;
  width: 44px;
  height: 118px;
  pointer-events: none;
}

.watermark {
  position: absolute;
  top: 257px;
  left: 379px;
  z-index: 5;
  width: 190px;
  height: 90px;
  font-family: "Liberation Sans", "Noto Sans CJK SC", sans-serif;
  pointer-events: none;
}
```
